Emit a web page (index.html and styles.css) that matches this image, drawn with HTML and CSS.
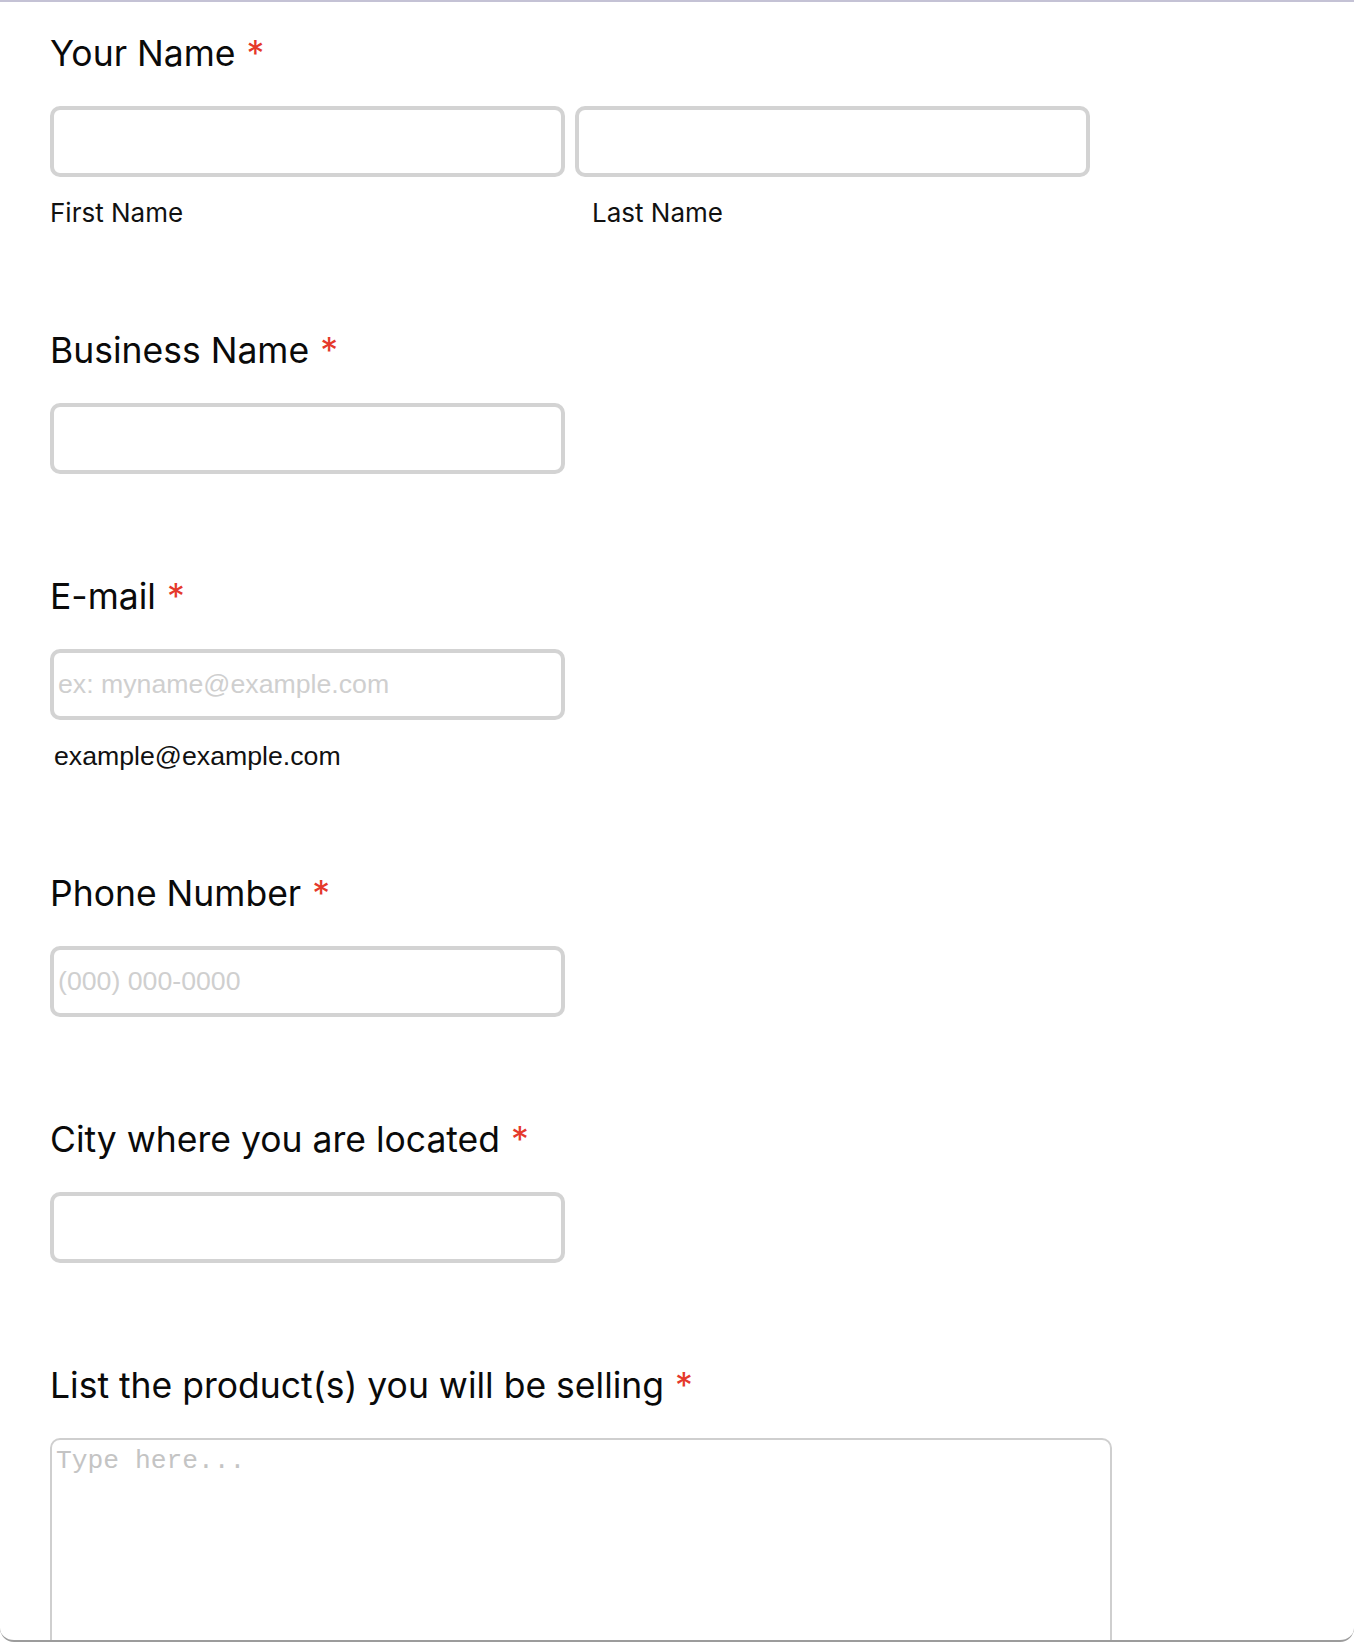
FILE: index.html
```html
<!DOCTYPE html>
<html lang="en">
<head>
<meta charset="utf-8">
<title>Form</title>
<link rel="stylesheet" href="styles.css">
</head>
<body>
<div class="frame">
  <form class="form">
    <div class="field field-sub">
      <label class="label">Your Name <span class="req">*</span></label>
      <div class="name-row">
        <div class="name-col">
          <input class="input" type="text">
          <span class="sublabel">First Name</span>
        </div>
        <div class="name-col">
          <input class="input" type="text">
          <span class="sublabel sublabel-last">Last Name</span>
        </div>
      </div>
    </div>

    <div class="field">
      <label class="label">Business Name <span class="req">*</span></label>
      <input class="input" type="text">
    </div>

    <div class="field field-sub">
      <label class="label">E-mail <span class="req">*</span></label>
      <input class="input" type="email" placeholder="ex: myname@example.com">
      <span class="sublabel sublabel-mail">example@example.com</span>
    </div>

    <div class="field">
      <label class="label">Phone Number <span class="req">*</span></label>
      <input class="input" type="tel" placeholder="(000) 000-0000">
    </div>

    <div class="field">
      <label class="label">City where you are located <span class="req">*</span></label>
      <input class="input" type="text">
    </div>

    <div class="field">
      <label class="label">List the product(s) you will be selling <span class="req">*</span></label>
      <textarea class="textarea" placeholder="Type here..."></textarea>
    </div>
  </form>
</div>
</body>
</html>
```

FILE: styles.css
```css
html, body {
  margin: 0;
  padding: 0;
  background: #ffffff;
}

.frame {
  box-sizing: border-box;
  width: 1354px;
  height: 1642px;
  border-top: 2px solid #c4c2d5;
  border-bottom: 2px solid #9c9c9c;
  border-radius: 0 0 14px 14px;
  overflow: hidden;
  background: #ffffff;
}

.form {
  display: flex;
  flex-direction: column;
  padding: 32px 0 0 50px;
}

.field {
  display: flex;
  flex-direction: column;
  align-items: flex-start;
  margin-bottom: 103px;
}

.field-sub {
  margin-bottom: 102px;
}

.label {
  font-family: "Inter", "Noto Sans", sans-serif;
  font-size: 35.5px;
  line-height: 40px;
  color: #0a0a0a;
  margin-bottom: 32px;
}

.req {
  color: #e5392b;
  margin-left: 1px;
}

.name-row {
  display: grid;
  grid-template-columns: 515px 515px;
  column-gap: 10px;
}

.name-col {
  display: flex;
  flex-direction: column;
}

.input {
  box-sizing: border-box;
  width: 515px;
  height: 71px;
  border: 4px solid #d3d3d3;
  border-radius: 10px;
  padding: 0 4px;
  margin: 0;
  font-family: "Liberation Sans", Arial, sans-serif;
  font-size: 26.7px;
  color: #000;
  background: #fff;
  outline: none;
}

.input::placeholder {
  color: #cfcfcf;
}

.sublabel {
  font-family: "Inter", "Noto Sans", sans-serif;
  font-size: 26px;
  line-height: 32px;
  color: #111;
  margin-top: 20px;
}

.sublabel-last {
  padding-left: 17px;
}

.sublabel-mail {
  font-family: "Liberation Sans", Arial, sans-serif;
  font-size: 26.7px;
  padding-left: 4px;
}

.textarea {
  box-sizing: border-box;
  width: 1062px;
  height: 320px;
  border: 2px solid #cfcfcf;
  border-radius: 10px;
  padding: 6px 4px;
  margin: 0;
  font-family: "Liberation Mono", "Courier New", monospace;
  font-size: 26.3px;
  resize: none;
  outline: none;
  background: #fff;
}

.textarea::placeholder {
  color: #c4c4c4;
}
```
